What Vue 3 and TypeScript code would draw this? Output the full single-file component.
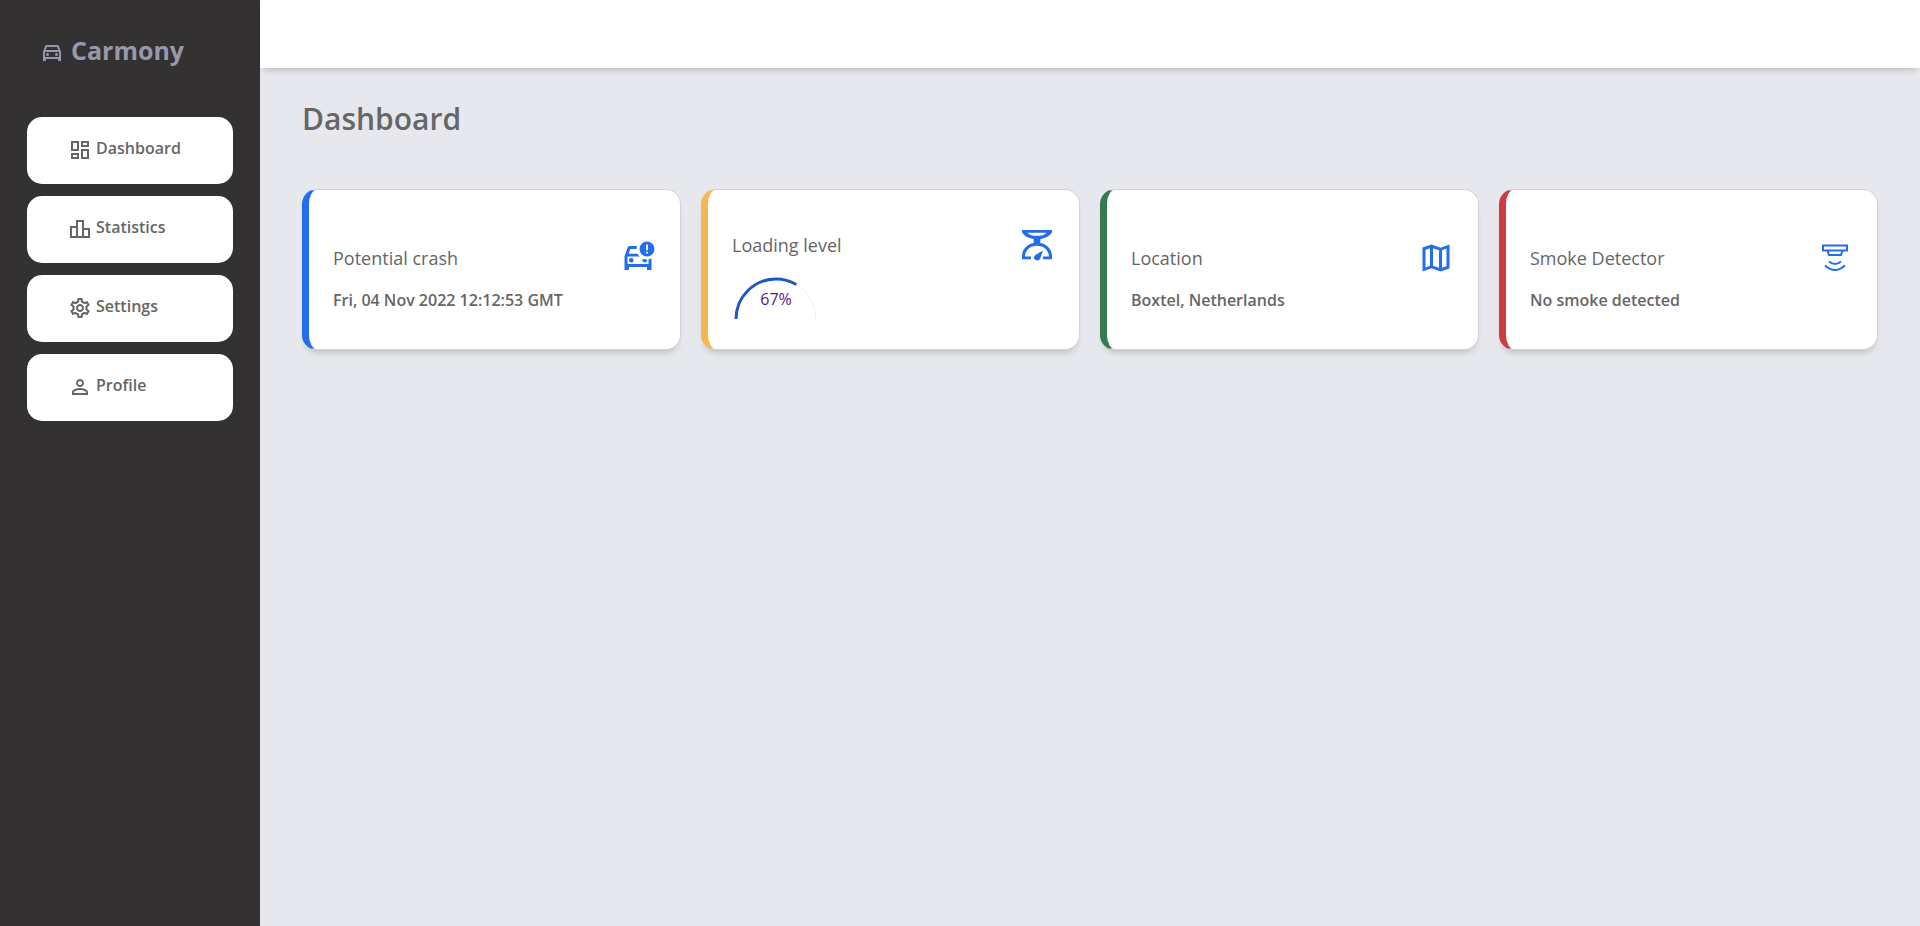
<script setup lang="ts">
interface NavItem {
  label: string
  icon: string
}

interface StatusCard {
  title: string
  tone: 'blue' | 'amber' | 'green' | 'red'
  icon: 'crash' | 'scale' | 'map' | 'smoke'
  value?: string
  percent?: number
}

const navItems: NavItem[] = [
  {
    label: 'Dashboard',
    icon: 'M19 5v2h-4V5h4M9 5v6H5V5h4m10 8v6h-4v-6h4M9 17v2H5v-2h4M21 3h-8v6h8V3zM11 3H3v10h8V3zm10 8h-8v10h8V11zm-10 4H3v6h8v-6z',
  },
  {
    label: 'Statistics',
    icon: 'M16 11V3H8v6H2v12h20V11h-6zm-6-6h4v14h-4V5zm-6 6h4v8H4v-8zm16 8h-4v-6h4v6z',
  },
  {
    label: 'Settings',
    icon: 'M19.43 12.98c.04-.32.07-.64.07-.98 0-.34-.03-.66-.07-.98l2.11-1.65c.19-.15.24-.42.12-.64l-2-3.46c-.09-.16-.26-.25-.44-.25-.06 0-.12.01-.17.03l-2.49 1c-.52-.4-1.08-.73-1.69-.98l-.38-2.65C14.46 2.18 14.25 2 14 2h-4c-.25 0-.46.18-.49.42l-.38 2.65c-.61.25-1.17.59-1.69.98l-2.49-1c-.06-.02-.12-.03-.18-.03-.17 0-.34.09-.43.25l-2 3.46c-.13.22-.07.49.12.64l2.11 1.65c-.04.32-.07.65-.07.98 0 .33.03.66.07.98l-2.11 1.65c-.19.15-.24.42-.12.64l2 3.46c.09.16.26.25.44.25.06 0 .12-.01.17-.03l2.49-1c.52.4 1.08.73 1.69.98l.38 2.65c.03.24.24.42.49.42h4c.25 0 .46-.18.49-.42l.38-2.65c.61-.25 1.17-.59 1.69-.98l2.49 1c.06.02.12.03.18.03.17 0 .34-.09.43-.25l2-3.46c.12-.22.07-.49-.12-.64l-2.11-1.65zm-1.98-1.71c.04.31.05.52.05.73 0 .21-.02.43-.05.73l-.14 1.13.89.7 1.08.84-.7 1.21-1.27-.51-1.04-.42-.9.68c-.43.32-.84.56-1.25.73l-1.06.43-.16 1.13-.2 1.35h-1.4l-.19-1.35-.16-1.13-1.06-.43c-.43-.18-.83-.41-1.23-.71l-.91-.7-1.06.43-1.27.51-.7-1.21 1.08-.84.89-.7-.14-1.13c-.03-.31-.05-.54-.05-.74s.02-.43.05-.73l.14-1.13-.89-.7-1.08-.84.7-1.21 1.27.51 1.04.42.9-.68c.43-.32.84-.56 1.25-.73l1.06-.43.16-1.13.2-1.35h1.39l.19 1.35.16 1.13 1.06.43c.43.18.83.41 1.23.71l.91.7 1.06-.43 1.27-.51.7 1.21-1.07.85-.89.7.14 1.13zM12 8c-2.21 0-4 1.79-4 4s1.79 4 4 4 4-1.79 4-4-1.79-4-4-4zm0 6c-1.1 0-2-.9-2-2s.9-2 2-2 2 .9 2 2-.9 2-2 2z',
  },
  {
    label: 'Profile',
    icon: 'M12 5.9c1.16 0 2.1.94 2.1 2.1s-.94 2.1-2.1 2.1S9.9 9.16 9.9 8s.94-2.1 2.1-2.1m0 9c2.97 0 6.1 1.46 6.1 2.1v1.1H5.9V17c0-.64 3.13-2.1 6.1-2.1M12 4C9.79 4 8 5.79 8 8s1.79 4 4 4 4-1.79 4-4-1.79-4-4-4zm0 9c-2.67 0-8 1.34-8 4v3h16v-3c0-2.66-5.33-4-8-4z',
  },
]

const cards: StatusCard[] = [
  { title: 'Potential crash', tone: 'blue', icon: 'crash', value: 'Fri, 04 Nov 2022 12:12:53 GMT' },
  { title: 'Loading level', tone: 'amber', icon: 'scale', percent: 67 },
  { title: 'Location', tone: 'green', icon: 'map', value: 'Boxtel, Netherlands' },
  { title: 'Smoke Detector', tone: 'red', icon: 'smoke', value: 'No smoke detected' },
]
</script>

<template>
  <div class="layout">
    <aside class="sidebar">
      <a class="brand" href="#">
        <svg class="icon" viewBox="0 0 24 24" aria-hidden="true">
          <path fill-rule="evenodd" d="M18.92 6.01C18.72 5.42 18.16 5 17.5 5h-11c-.66 0-1.21.42-1.42 1.01L3 12v9h3v-2h12v2h3v-9l-2.08-5.99zM6.85 7h10.29l1.08 3.11H5.77L6.85 7zM19 17H5v-5h14v5z" />
          <circle cx="7.5" cy="14.5" r="1.5" />
          <circle cx="16.5" cy="14.5" r="1.5" />
        </svg>
        <span>Carmony</span>
      </a>
      <nav class="nav">
        <a v-for="item in navItems" :key="item.label" class="nav-link" href="#">
          <svg class="icon" viewBox="0 0 24 24" aria-hidden="true"><path :d="item.icon" /></svg>
          <span>{{ item.label }}</span>
        </a>
      </nav>
    </aside>

    <div class="page">
      <header class="topbar"></header>
      <main class="content">
        <h1>Dashboard</h1>
        <div class="cards">
          <section v-for="card in cards" :key="card.title" class="card" :class="card.tone">
            <div class="card-head">
              <h2>{{ card.title }}</h2>

              <svg v-if="card.icon === 'crash'" class="card-icon" viewBox="0 0 24 24" aria-hidden="true">
                <mask id="badge-gap">
                  <rect width="24" height="24" fill="#fff" />
                  <circle cx="18" cy="6" r="7" fill="#000" />
                </mask>
                <g mask="url(#badge-gap)">
                  <path fill-rule="evenodd" d="M18.92 5.01C18.72 4.42 18.16 4 17.5 4h-11c-.66 0-1.21.42-1.42 1.01L3 11v9h3v-2h12v2h3v-9l-2.08-5.99zM6.85 6h10.29l1.08 3.11H5.77L6.85 6zM19 16H5v-5h14v5z" />
                  <circle cx="7.5" cy="13.5" r="1.5" />
                  <circle cx="16.5" cy="13.5" r="1.5" />
                </g>
                <path fill-rule="evenodd" d="M18 1a5 5 0 1 0 0 10 5 5 0 0 0 0-10zm.6 8h-1.2V7.8h1.2zm0-2.2h-1.2V3h1.2z" />
              </svg>

              <svg v-else-if="card.icon === 'scale'" class="card-icon" viewBox="0 0 24 24" aria-hidden="true">
                <path fill-rule="evenodd" d="M2 2h20v1.500c-1.300 2.300-4.300 4-7.800 4.500v2.600c4.600.8 7.800 4.300 7.800 8.900v2h-6v-1.800h4c-.2-4.300-3.500-7.200-8-7.200s-7.800 2.900-8 7.200h4v1.800H2v-2c0-4.600 3.200-8.100 7.800-8.900V8C6.300 7.500 3.300 5.800 2 3.500zm3.500 1.800c1.700 1.500 3.700 2.100 6.500 2.100s4.800-.6 6.500-2.100z" />
                <path d="M15.900 15.700l-1.700 5.100a2.200 2.200 0 0 1-4.200-.2c-.1-.8.200-1.500.9-2z" />
              </svg>

              <svg v-else-if="card.icon === 'map'" class="card-icon" viewBox="0 0 24 24" aria-hidden="true">
                <path fill-rule="evenodd" d="M21 3l-6 2.100L9 3 3 5v16l6-2.100 6 2.100 6-2zM10 5.470l4 1.400v11.660l-4-1.400zM5 6.460l3-1.010v11.700l-3 1.160zM19 17.540l-3 1.010V6.860l3-1.160z" />
              </svg>

              <svg v-else class="card-icon outline" viewBox="0 0 36 36" aria-hidden="true">
                <path d="M6 5.500h24v5H6zM10.500 10.500l1.500 4.500h12l1.500-4.500M12 21.500q6 5 12 0M8 25.500q10 9 20 0" />
              </svg>
            </div>

            <svg v-if="card.percent !== undefined" class="gauge" viewBox="0 0 86 44" role="img" :aria-label="`${card.percent}%`">
              <path class="gauge-track" d="M4 44a40 40 0 0 1 80 0" />
              <path class="gauge-fill" pathLength="100" :stroke-dasharray="`${card.percent} 100`" d="M4 44a40 40 0 0 1 80 0" />
              <text x="44" y="30" text-anchor="middle">{{ card.percent }}%</text>
            </svg>
            <p v-else>{{ card.value }}</p>
          </section>
        </div>
      </main>
    </div>
  </div>
</template>

<style>
body {
  margin: 0;
  background: #e6e8ed;
}
</style>

<style scoped>
.layout {
  display: flex;
  min-height: 100vh;
  font-family: "Open Sans", "Noto Sans", sans-serif;
  font-size: 16px;
  line-height: 24px;
  color: #666;
}

.sidebar {
  flex: 0 0 260px;
  box-sizing: border-box;
  padding: 32px 27px;
  background: #333132;
}

.brand {
  display: flex;
  align-items: center;
  gap: 7px;
  box-sizing: border-box;
  height: 37px;
  padding: 0 0 2px 13px;
  font-size: 25px;
  font-weight: 700;
  color: #9799ab;
  text-decoration: none;
}

.icon {
  flex: none;
  width: 24px;
  height: 24px;
  margin-top: 4px;
  fill: currentColor;
}

.nav {
  display: grid;
  gap: 12px;
  margin-top: 48px;
}

.nav-link {
  display: flex;
  align-items: center;
  gap: 4px;
  box-sizing: border-box;
  height: 67px;
  padding: 0 16px 5px 41px;
  border-radius: 15px;
  background: #fff;
  font-weight: 600;
  color: #666;
  text-decoration: none;
}

.page {
  flex: 1;
  min-width: 0;
}

.topbar {
  height: 68px;
  background: #fff;
  box-shadow: 0 6px 7px -4px rgba(0, 0, 0, 0.2);
}

.content {
  padding: 30px 42px;
}

h1 {
  margin: 0;
  font-size: 30px;
  line-height: 42px;
  font-weight: 600;
}

.cards {
  display: grid;
  grid-template-columns: repeat(4, minmax(0, 1fr));
  gap: 20px;
  margin-top: 49px;
}

.card {
  display: flex;
  flex-direction: column;
  justify-content: center;
  gap: 12px;
  box-sizing: border-box;
  min-height: 161px;
  padding: 12px 24px 0;
  border: 1px solid #d2d3d5;
  border-left-width: 7px;
  border-radius: 15px;
  background: #fff;
  box-shadow: 0 6px 7px -4px rgba(0, 0, 0, 0.2);
}

.blue { border-left-color: #246dec; }
.amber { border-left-color: #f5b74f; }
.green { border-left-color: #367952; }
.red { border-left-color: #cc3c43; }

.card-head {
  display: flex;
  align-items: center;
  justify-content: space-between;
}

h2 {
  margin: 0;
  font-size: 18px;
  font-weight: 400;
}

p {
  margin: 0;
  font-weight: 600;
}

.card-icon {
  flex: none;
  width: 36px;
  height: 36px;
  fill: #246dec;
}

.outline {
  fill: none;
  stroke: #246dec;
  stroke-width: 2;
}

.gauge {
  width: 86px;
  height: 44px;
  margin-bottom: 5px;
}

.gauge path {
  fill: none;
}

.gauge-track {
  stroke: #eee;
}

.gauge-fill {
  stroke: #1f56bf;
  stroke-width: 3;
}

.gauge text {
  fill: #551a8b;
}
</style>
